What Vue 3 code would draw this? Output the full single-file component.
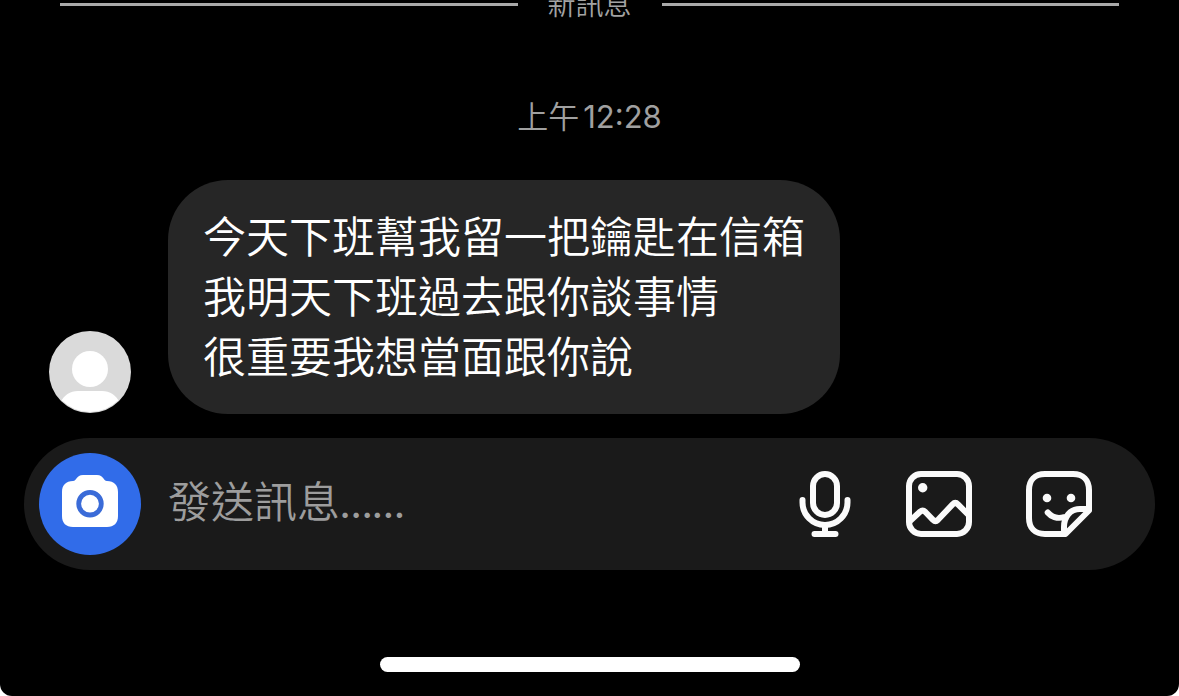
<script setup>
import { ref } from 'vue'

const draft = ref('')
const messageLines = [
  '今天下班幫我留一把鑰匙在信箱',
  '我明天下班過去跟你談事情',
  '很重要我想當面跟你說',
]
</script>

<template>
  <main class="screen">
    <div class="divider" role="separator">
      <span class="rule"></span>
      <span class="divider-label">新訊息</span>
      <span class="rule"></span>
    </div>

    <time class="timestamp">上午<span class="clock">12:28</span></time>

    <section class="message">
      <svg class="avatar" viewBox="0 0 82 82" aria-hidden="true">
        <defs>
          <clipPath id="avatar-clip"><circle cx="41" cy="41" r="40" /></clipPath>
        </defs>
        <circle cx="41" cy="41" r="41" fill="#dadada" />
        <circle cx="41" cy="38" r="18" fill="#fff" />
        <path
          clip-path="url(#avatar-clip)"
          d="M11 72C15 64 21 60 29 60H53C61 60 67 64 71 72V82H11Z"
          fill="#fff"
        />
      </svg>
      <div class="bubble">
        <p v-for="line in messageLines" :key="line" class="line">{{ line }}</p>
      </div>
    </section>

    <form class="composer" @submit.prevent>
      <button class="camera" type="button" aria-label="相機">
        <svg viewBox="0 0 102 102" aria-hidden="true">
          <path
            d="M34 28C38 28 37 22 44 22H58C65 22 64 28 68 28C75 28 79 32 79 39V63C79 70 75 74 68 74H34C27 74 23 70 23 63V39C23 32 27 28 34 28Z"
            fill="#fff"
          />
          <circle cx="51" cy="50.7" r="11.3" fill="none" stroke="#3a6bd8" stroke-width="4.8" />
        </svg>
      </button>
      <input v-model="draft" class="field" type="text" placeholder="發送訊息……" aria-label="發送訊息" />
      <div class="tools">
        <button class="tool mic" type="button" aria-label="語音">
          <svg viewBox="0 0 60 72" aria-hidden="true">
            <rect x="18" y="6" width="24" height="41" rx="12" />
            <path d="M7.5 32V34.5A22.5 22.5 0 0 0 52.5 34.5V32M30 57V66M19.5 66H40.5" />
          </svg>
        </button>
        <button class="tool" type="button" aria-label="相片">
          <svg viewBox="0 0 72 72" aria-hidden="true">
            <rect x="6" y="6" width="60" height="60" rx="12" />
            <circle class="dot" cx="19.7" cy="19.7" r="4.7" />
            <path d="M7 53L17 43.8Q19.7 41.5 22.4 44L30 51.8Q32.5 54.2 35 51.8L49.6 36.4Q52.3 33.7 55 36.4L65 46.5" />
          </svg>
        </button>
        <button class="tool" type="button" aria-label="貼圖">
          <svg viewBox="0 0 72 72" aria-hidden="true">
            <path d="M41 66H22C12 66 6 60 6 50V22C6 12 12 6 22 6H50C60 6 66 12 66 22V42.5L42.5 66Z" />
            <path d="M41 65V59C41 49 47 41 57 41H65" />
            <path d="M24.7 44.5C28 48.5 34 51 41 49.2" />
            <circle class="dot" cx="24" cy="30" r="4.3" />
            <circle class="dot" cx="48" cy="30" r="4.3" />
          </svg>
        </button>
      </div>
    </form>

    <div class="home-indicator"></div>
  </main>
</template>

<style>
body {
  margin: 0;
  background: #fff;
}
</style>

<style scoped>
.screen {
  box-sizing: border-box;
  display: flex;
  flex-direction: column;
  min-height: 100vh;
  padding-bottom: 24px;
  overflow: hidden;
  background: #000;
  border-radius: 0 0 12px 12px;
  font-family: Inter, "Noto Sans CJK TC", sans-serif;
  font-weight: 350;
  color: #fff;
}

.divider {
  display: flex;
  align-items: center;
  gap: 30px;
  height: 9px;
  padding: 0 60px;
}

.rule {
  flex: 1;
  height: 3px;
  background: #a9a9a9;
}

.divider-label {
  font-size: 28px;
  line-height: 40px;
  color: #a3a3a3;
}

.timestamp {
  display: flex;
  justify-content: center;
  gap: 4px;
  margin-top: 88px;
  font-size: 31px;
  line-height: 40px;
  color: #a0a0a0;
}

.clock {
  font-weight: 400;
}

.message {
  display: flex;
  align-items: flex-end;
  gap: 37px;
  margin-top: 43px;
  padding: 0 49px;
}

.avatar {
  flex: none;
  width: 82px;
  height: 82px;
  margin-bottom: 1px;
}

.bubble {
  padding: 27px 35px;
  background: #262626;
  border-radius: 60px;
}

.line {
  margin: 0;
  font-size: 43px;
  line-height: 60px;
}

.composer {
  display: flex;
  align-items: center;
  margin: 24px 24px 0;
  padding: 15px 60px 15px 15px;
  background: #1a1a1a;
  border-radius: 66px;
}

.camera {
  flex: none;
  width: 102px;
  height: 102px;
  padding: 0;
  border: 0;
  border-radius: 50%;
  background: #316ce9;
}

.camera svg,
.tool svg {
  display: block;
  width: 100%;
  height: 100%;
}

.field {
  flex: 1;
  min-width: 0;
  height: 60px;
  margin-left: 27px;
  padding: 0 0 6px;
  border: 0;
  outline: 0;
  background: transparent;
  font-family: Lato, "Noto Sans CJK TC DemiLight", "Noto Sans CJK TC", sans-serif;
  font-size: 43px;
  font-weight: 400;
  color: #fff;
}

.field::placeholder {
  color: #9d9d9d;
  opacity: 1;
}

.tools {
  display: flex;
  gap: 48px;
}

.tool {
  width: 72px;
  height: 72px;
  padding: 0;
  border: 0;
  background: transparent;
}

.tool.mic {
  width: 60px;
}

.tool svg {
  fill: none;
  stroke: #fafafa;
  stroke-width: 6;
  stroke-linecap: round;
  stroke-linejoin: round;
}

.tool .dot {
  fill: #fafafa;
  stroke: none;
}

.home-indicator {
  align-self: center;
  width: 420px;
  height: 15px;
  margin-top: auto;
  background: #fff;
  border-radius: 8px;
}
</style>
